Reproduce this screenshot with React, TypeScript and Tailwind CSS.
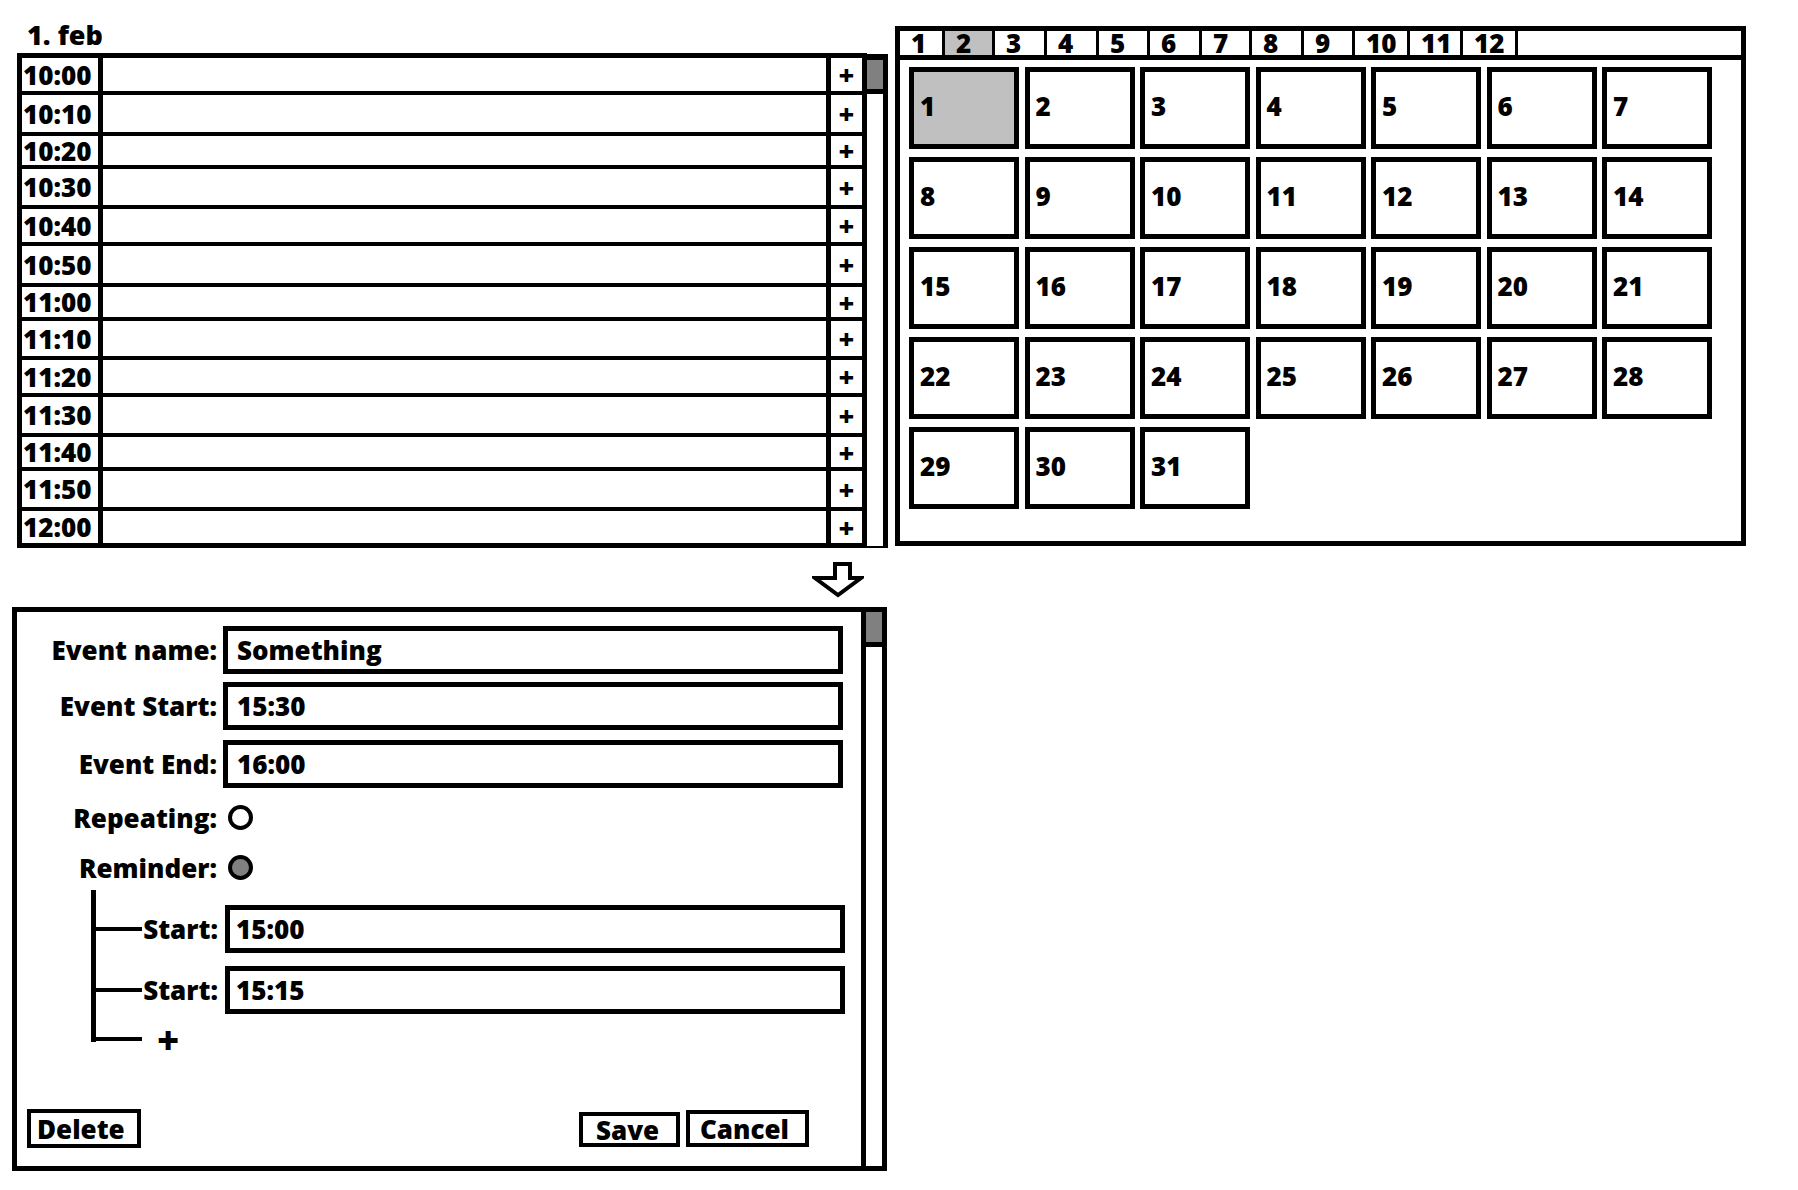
const TIME_ROWS = [
  { time: '10:00', h: 'h-[33px]' },
  { time: '10:10', h: 'h-[41px]' },
  { time: '10:20', h: 'h-[33px]' },
  { time: '10:30', h: 'h-[40px]' },
  { time: '10:40', h: 'h-[37px]' },
  { time: '10:50', h: 'h-[41px]' },
  { time: '11:00', h: 'h-[34px]' },
  { time: '11:10', h: 'h-[39px]' },
  { time: '11:20', h: 'h-[37px]' },
  { time: '11:30', h: 'h-[40px]' },
  { time: '11:40', h: 'h-[34px]' },
  { time: '11:50', h: 'h-[40px]' },
  { time: '12:00', h: 'h-[36px]' },
];

const MONTH_TABS = [
  { label: '1', w: 'w-[45px]' },
  { label: '2', w: 'w-[50px]' },
  { label: '3', w: 'w-[52px]' },
  { label: '4', w: 'w-[52px]' },
  { label: '5', w: 'w-[51px]' },
  { label: '6', w: 'w-[52px]' },
  { label: '7', w: 'w-[50px]' },
  { label: '8', w: 'w-[52px]' },
  { label: '9', w: 'w-[51px]' },
  { label: '10', w: 'w-[55px]' },
  { label: '11', w: 'w-[53px]' },
  { label: '12', w: 'w-[55px]' },
];

const DAYS = Array.from({ length: 31 }, (_, i) => i + 1);

function Field({ label, value }: { label: string; value: string }) {
  return (
    <div className="flex items-center">
      <div className="w-[200px] text-right text-[26px] font-extrabold leading-none">{label}</div>
      <div className="ml-[6px] flex h-[48px] w-[620px] items-center border-[5px] border-black pl-[9px] text-[26px] font-extrabold leading-none">
        {value}
      </div>
    </div>
  );
}

function Radio({ label, checked }: { label: string; checked?: boolean }) {
  return (
    <div className="flex h-[25px] items-center">
      <div className="w-[200px] text-right text-[26px] font-extrabold leading-none">{label}</div>
      <span
        className={[
          'ml-[11px] h-[25px] w-[25px] rounded-full border-[4px] border-black',
          checked ? 'bg-[#808080]' : 'bg-white',
        ].join(' ')}
      />
    </div>
  );
}

function ReminderRow({ value }: { value: string }) {
  return (
    <div className="flex h-[48px] items-center">
      <div className="h-[4px] w-[46px] bg-black" />
      <div className="w-[76px] text-right text-[26px] font-extrabold leading-none">Start:</div>
      <div className="ml-[7px] flex h-[48px] w-[620px] items-center border-[5px] border-black pl-[6px] text-[26px] font-extrabold leading-none">
        {value}
      </div>
    </div>
  );
}

export default function App() {
  return (
    <div className="h-[1190px] w-[1798px] bg-white font-['Open_Sans','Liberation_Sans',sans-serif] text-black">
      <div className="flex items-start">
        {/* day schedule */}
        <div className="ml-[17px] w-[871px]">
          <div className="h-[53px] pl-[10px] pt-[22px] text-[27px] font-extrabold leading-[26px]">1. feb</div>
          <div className="flex items-start">
            <div className="w-[850px] border-[5px] border-black">
              {TIME_ROWS.map((row, i) => (
                <div key={row.time} className={`flex ${row.h} ${i > 0 ? 'border-t-4 border-black' : ''}`}>
                  <div className="flex w-[81px] items-center border-r-[5px] border-black pl-[1px] text-[26px] font-extrabold leading-none">
                    {row.time}
                  </div>
                  <div className="flex-1 border-r-[5px] border-black" />
                  <div className="flex w-[31px] items-center justify-center text-[27px] font-black leading-none">+</div>
                </div>
              ))}
            </div>
            <div className="mt-[1px] flex h-[494px] w-[21px] flex-col border-b-2 border-r-[5px] border-t-[6px] border-black">
              <div className="h-[34px] border-b-[5px] border-black bg-[#808080]" />
            </div>
          </div>
        </div>

        {/* month calendar */}
        <div className="ml-[7px] mt-[26px] h-[520px] w-[851px] border-[5px] border-black">
          <div className="flex h-[29px] border-b-[5px] border-black">
            {MONTH_TABS.map((tab) => (
              <div
                key={tab.label}
                className={[
                  'h-[24px] border-r-[3px] border-black pl-[11px] text-[26px] font-extrabold leading-[25px]',
                  tab.w,
                  tab.label === '2' ? 'bg-[#c0c0c0]' : '',
                ].join(' ')}
              >
                {tab.label}
              </div>
            ))}
          </div>
          <div className="grid grid-cols-[repeat(7,110px)] gap-x-[5.5px] gap-y-[8px] pl-[9px] pt-[7px]">
            {DAYS.map((day) => (
              <div
                key={day}
                className={[
                  'flex h-[82px] items-center border-[5px] border-black pb-[5px] pl-[6px] text-[26px] font-extrabold leading-none',
                  day === 1 ? 'bg-[#c0c0c0]' : 'bg-white',
                ].join(' ')}
              >
                {day}
              </div>
            ))}
          </div>
        </div>
      </div>

      {/* arrow */}
      <div className="h-[59px] pl-[812px] pt-[12px]">
        <svg width="52" height="40" viewBox="0 0 52 40">
          <polygon
            points="23,4 38,4 38,18 49,18 26,35 3,18 23,18"
            fill="white"
            stroke="black"
            strokeWidth="4"
            strokeLinejoin="miter"
          />
        </svg>
      </div>

      {/* event editor */}
      <div className="ml-[12px] flex h-[564px] w-[875px] border-[5px] border-black">
        <div className="flex w-[844px] flex-col pt-[14px]">
          <Field label="Event name:" value="Something" />
          <div className="mt-[8px]">
            <Field label="Event Start:" value="15:30" />
          </div>
          <div className="mt-[10px]">
            <Field label="Event End:" value="16:00" />
          </div>
          <div className="mt-[17px]">
            <Radio label="Repeating:" />
          </div>
          <div className="mt-[25px]">
            <Radio label="Reminder:" checked />
          </div>

          <div className="ml-[74px] mt-[10px] flex h-[152px] flex-col border-l-[5px] border-black pt-[15px]">
            <ReminderRow value="15:00" />
            <div className="mt-[13px]">
              <ReminderRow value="15:15" />
            </div>
            <div className="mt-auto mb-[1px] flex h-[4px] items-center">
              <div className="h-[4px] w-[46px] bg-black" />
              <span className="ml-[15px] text-[38px] font-black leading-none">+</span>
            </div>
          </div>

          <div className="mt-[67px] flex items-end">
            <button
              type="button"
              className="ml-[10px] h-[39px] w-[114px] border-4 border-black pl-[6px] text-left text-[26px] font-extrabold leading-none"
            >
              Delete
            </button>
            <button
              type="button"
              className="mb-[1px] ml-[438px] h-[35px] w-[101px] border-4 border-black pl-[13px] text-left text-[26px] font-extrabold leading-none"
            >
              Save
            </button>
            <button
              type="button"
              className="mb-[1px] ml-[6px] h-[37px] w-[123px] border-4 border-black pl-[10px] text-left text-[26px] font-extrabold leading-none"
            >
              Cancel
            </button>
          </div>
        </div>
        <div className="w-[21px] border-l-[5px] border-black">
          <div className="h-[35px] border-b-[5px] border-black bg-[#808080]" />
        </div>
      </div>
    </div>
  );
}
